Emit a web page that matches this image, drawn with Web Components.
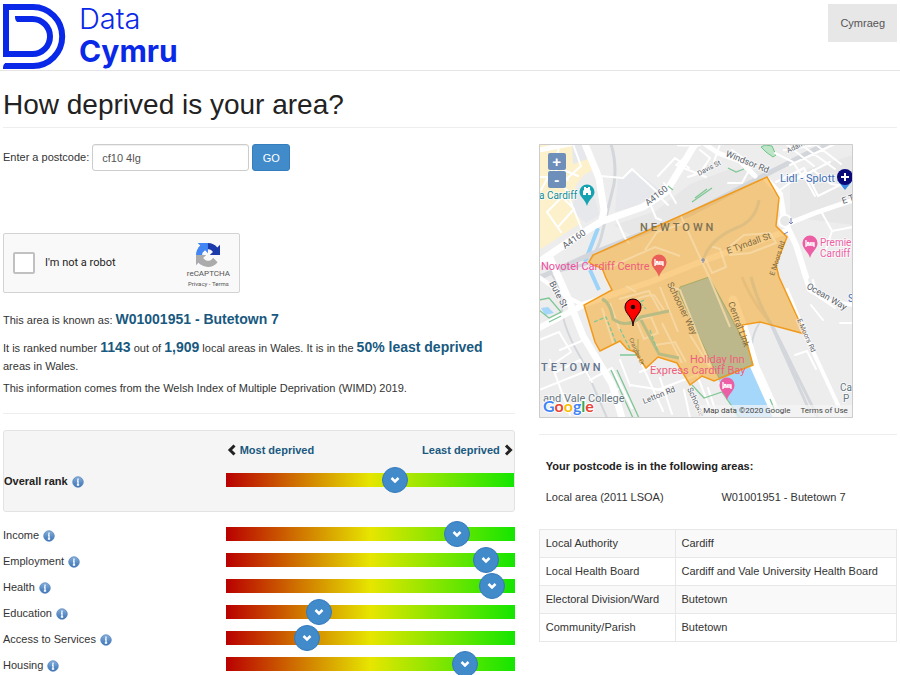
<!DOCTYPE html>
<html lang="en">
<head>
<meta charset="utf-8">
<meta name="viewport" content="width=device-width, initial-scale=1">
<title>How deprived is your area?</title>
<style>
:root{--ink:#333;--accent:#19597f;--brand:#428bca;--rule:#eee;}
body{margin:0;background:#fff;color:var(--ink);font:11px/16px "Liberation Sans",Arial,sans-serif;}
</style>
</head>
<body>
<wimd-page></wimd-page>

<template id="t-page">
<style>
:host{display:block}
main{padding:0 3px}
.cols{display:grid;grid-template-columns:minmax(0,10fr) minmax(0,7fr);gap:24px;align-items:start;padding-top:16px}
h1{margin:0;padding:16px 0 4px;font-size:28px;line-height:36px;font-weight:400;color:#222;border-bottom:1px solid var(--rule)}
hr{border:0;border-top:1px solid var(--rule);margin:16px 0}
robot-check{margin-top:62px}
area-summary{margin-top:18px}
.ranks{margin-top:9px}
</style>
<site-header></site-header>
<main>
  <h1>How deprived is your area?</h1>
  <div class="cols">
    <section>
      <postcode-form></postcode-form>
      <robot-check></robot-check>
      <area-summary></area-summary>
      <hr>
      <rank-well><rank-row value="597" strong>Overall rank</rank-row></rank-well>
      <div class="ranks">
        <rank-row value="829">Income</rank-row>
        <rank-row value="939">Employment</rank-row>
        <rank-row value="962">Health</rank-row>
        <rank-row value="304">Education</rank-row>
        <rank-row value="259">Access to Services</rank-row>
        <rank-row value="860">Housing</rank-row>
      </div>
    </section>
    <section>
      <area-map></area-map>
      <hr>
      <area-tables></area-tables>
    </section>
  </div>
</main>
</template>

<template id="t-header">
<style>
:host{display:block;border-bottom:1px solid #e5e5e5}
header{display:flex;justify-content:space-between;align-items:flex-start;padding:4px 3px 0}
.logo{display:block;color:#0a28e8}
svg{display:block;overflow:visible}
.lang{background:#e7e7e7;color:#555;text-decoration:none;padding:11px 12px;line-height:16px}
</style>
<header>
  <a class="logo" href="#" aria-label="Data Cymru">
    <svg width="180" height="66" viewBox="3 4 180 66">
      <g fill="none" stroke="currentColor" stroke-width="6"><path d="M17 19H32.500A17.500 17.500 0 0 1 32.500 54H6V7H33A29.200 29.500 0 0 1 33 66H5"/></g>
      <path fill="currentColor" d="M15 16h4v6c-3 0-4-2-4-6zM3 69c0-4 1-6 4-6v6z"/>
      <g fill="currentColor" font-family="Inter, sans-serif"><text x="79" y="29" font-size="29" font-weight="300">Data</text><text x="79" y="62" font-size="30" font-weight="700">Cymru</text></g>
    </svg>
  </a>
  <a class="lang" href="#">Cymraeg</a>
</header>
</template>

<template id="t-form">
<style>
:host{display:block}
form{display:flex;align-items:center;gap:3px}
label{padding-bottom:2px}
input{box-sizing:border-box;width:157px;height:27px;border:1px solid #ccc;border-radius:3px;padding:0 9px;font:inherit;color:#555;background:#fff;box-shadow:inset 0 1px 1px #0001}
button{box-sizing:border-box;height:27px;width:38px;padding:0;border:1px solid #357ebd;border-radius:3px;background:var(--brand);color:#fff;font:inherit}
</style>
<form onsubmit="return false"><label for="pc">Enter a postcode:</label><input id="pc" type="text" value="cf10 4lg"><button>GO</button></form>
</template>

<template id="t-robot">
<style>
:host{display:block}
.box{box-sizing:border-box;width:237px;height:60px;display:flex;align-items:center;border:1px solid #d3d3d3;border-radius:2px;background:#f9f9f9;padding:0 9px;color:#222;font-family:Roboto,sans-serif}
label{display:flex;align-items:center;gap:10px;flex:1}
input{appearance:none;margin:0;width:22px;height:22px;box-sizing:border-box;border:2px solid #c1c1c1;border-radius:2px;background:#fff}
.brand{display:flex;flex-direction:column;align-items:center;color:#555;font-size:8px;line-height:10px;padding-top:6px}
.brand svg{display:block;margin-bottom:2px}
small{font-size:6px;line-height:10px}
a{color:inherit;text-decoration:none}
</style>
<div class="box">
  <label><input type="checkbox">I'm not a robot</label>
  <div class="brand">
    <svg width="24" height="24" viewBox="0 0 64 64"><path fill="#1c3aa9" d="M64 32V4.700l-7.200 7.200C51 4.700 42 .1 32 .1 21.600.1 12.400 5 6.500 12.700l11.800 11.900a15.500 15.500 0 0 1 4.700-5.300c2-1.600 5-2.900 9-2.900l1.200.1c5 .4 9.400 3.200 12 7.200L36.800 32z"/><path fill="#4285f4" d="M31.900.1H4.600l7.200 7.200C4.600 13.100 0 22 0 32c0 10.400 5 19.700 12.600 25.500l11.900-11.700a15.500 15.500 0 0 1-5.300-4.700c-1.600-2-2.900-5-2.900-9l.1-1.200c.4-5 3.200-9.400 7.200-12l8.300 8.300z"/><path fill="#ababab" d="M0 32v27.300l7.200-7.200C13 59.300 22 63.900 32 63.900c10.400 0 19.700-5 25.500-12.600L45.700 39.400a15.500 15.500 0 0 1-4.700 5.300c-2 1.600-5 2.900-9 2.900l-1.200-.1c-5-.4-9.400-3.200-12-7.200l8.400-8.300z"/></svg>
    <span>reCAPTCHA</span><small><a href="#">Privacy</a> - <a href="#">Terms</a></small>
  </div>
</div>
</template>

<template id="t-summary">
<style>
:host{display:block;padding-right:24px}
p{margin:0 0 4px;line-height:18px}
p:first-of-type{margin-bottom:10px}
b{font-size:14px;line-height:14px;color:var(--accent)}
</style>
<p>This area is known as: <b>W01001951 - Butetown 7</b></p>
<p>It is ranked number <b>1143</b> out of <b>1,909</b> local areas in Wales. It is in the <b>50% least deprived</b> areas in Wales.</p>
<p>This information comes from the Welsh Index of Multiple Deprivation (WIMD) 2019.</p>
</template>

<template id="t-well">
<style>
:host{display:block;border:1px solid #e3e3e3;border-radius:3px;background:#f5f5f5;padding:11px 0 18px}
.ends{display:grid;grid-template-columns:10fr 13fr;margin-bottom:9px}
.ends div{grid-column:2;display:flex;justify-content:space-between;color:var(--accent);font-weight:700}
span{display:flex;align-items:center;gap:4px}
svg{display:block;fill:none;stroke:#222;stroke-width:3}
</style>
<div class="ends"><div>
  <span><svg width="10" height="12" viewBox="0 0 10 12"><path d="M8.500 1.500 4 6l4.500 4.500"/></svg>Most deprived</span>
  <span>Least deprived<svg width="10" height="12" viewBox="0 0 10 12"><path d="M2 1.500 6.500 6 2 10.500"/></svg></span>
</div></div>
<slot></slot>
</template>

<template id="t-row">
<style>
:host{display:grid;grid-template-columns:10fr 13fr;align-items:center;height:26px}
:host([strong]){font-weight:700;color:#222}
.name{display:flex;align-items:center;gap:4px;padding-top:2px}
button{border:0;padding:0;background:none;display:block;width:12px;height:12px;margin-top:1px}
svg{display:block}
input{appearance:none;box-sizing:border-box;display:block;width:100%;margin:0;height:14px;background:linear-gradient(90deg,#b90000,#e6e600 50%,#14e600)}
input::-webkit-slider-runnable-track{height:14px}
input::-webkit-slider-thumb{appearance:none;width:26px;height:26px;margin-top:-6px;border:1px solid #3379bd;border-radius:50%;background:#428bca url("data:image/svg+xml,%3Csvg xmlns='http://www.w3.org/2000/svg' viewBox='0 0 24 24'%3E%3Cpath d='M8.500 10l3.500 3.500L15.500 10' fill='none' stroke='white' stroke-width='2.500'/%3E%3C/svg%3E") center/24px no-repeat;box-sizing:border-box}
</style>
<div class="name"><label for="r"><slot></slot></label><button type="button" aria-label="More information"><svg width="12" height="12" viewBox="0 0 12 12"><defs><linearGradient id="g" x2="0" y2="1"><stop stop-color="#86afdc"/><stop offset="1" stop-color="#3a73b5"/></linearGradient></defs><circle cx="6" cy="6" r="5.300" fill="url(#g)" stroke="#5482b8" stroke-width=".7"/><path d="M6 2.500v1.500M5 5h1v4M4.800 9h2.400" stroke="#fff" stroke-width="1.300" fill="none"/></svg></button></div>
<input id="r" type="range" min="0" max="1000">
</template>

<template id="t-tables">
<style>
:host{display:block}
table{border-collapse:collapse;table-layout:fixed;width:100%}
td,th{box-sizing:border-box;padding:0;text-align:left;font-weight:400;line-height:15px}
.one{margin-bottom:16px}
.one caption{text-align:left;font-weight:700;color:#222;padding:7px 7px 8px;line-height:16px}
.one th{padding:8px 7px;width:51%}
.two td,.two th{border:1px solid #e7e7e7;padding:6px}
.two th{width:38%;white-space:nowrap}
.two tr:nth-child(odd){background:#f9f9f9}
</style>
<table class="one"><caption>Your postcode is in the following areas:</caption><tbody><tr><th scope="row">Local area (2011 LSOA)</th><td>W01001951 - Butetown 7</td></tr></tbody></table>
<table class="two"><tbody>
<tr><th scope="row">Local Authority</th><td>Cardiff</td></tr>
<tr><th scope="row">Local Health Board</th><td>Cardiff and Vale University Health Board</td></tr>
<tr><th scope="row">Electoral Division/Ward</th><td>Butetown</td></tr>
<tr><th scope="row">Community/Parish</th><td>Butetown</td></tr>
</tbody></table>
</template>

<template id="t-map">
<style>
:host{display:block;position:relative;max-width:314px;font-family:Roboto,sans-serif;overflow:hidden}
svg{display:block;width:100%;height:auto}
.zoom{position:absolute;left:9px;top:9px;display:grid;gap:1px}
.zoom button{width:18px;height:17px;padding:0;border:0;border-radius:2px;background:#6f8fbb;color:#fff;font:700 15px/16px "Liberation Sans",Arial,sans-serif}
.credit{position:absolute;right:1px;bottom:1px;background:#f5f5f5b3;color:#444;font-size:8px;line-height:12px;padding:0 4px;display:flex;gap:10px}
.credit a{color:inherit;text-decoration:none}
.road{fill:none;stroke:#fff;stroke-linejoin:round;stroke-linecap:round}
.rail{fill:none;stroke:#d3d6db;stroke-linejoin:round}
.green{fill:none;stroke:#7fc796;stroke-width:1.300}
.halo{stroke:#fff;stroke-width:2;paint-order:stroke;stroke-opacity:.6}
</style>
<svg viewBox="539 144 314 274" role="img" aria-label="Map of Butetown 7">
<defs>
<clipPath id="zone"><path d="M589 262 593 255 767 177 779 198 776 226 787 237 776 265 779 277 805 334 760 322 742 325 753 365 714 381 702 376 690 385 677 363 658 357 646 368 635 352 627 349 620 341 600 351 595 342 584 305 612 290 606 278 602 268 593 265Z"/></clipPath>
<g id="bed"><path d="M0 12C-2 5-7.500 3-7.500-3a7.500 7.500 0 0 1 15 0C7.500 3 2 5 0 12z"/><path d="M-4-6v7M-4-1H4v2M4-1v-2H0v2" fill="none" stroke="#fff" stroke-width="1.300"/><circle cx="-2" cy="-3" r="1.200" fill="#fff"/></g>
</defs>
<path fill="#ededed" d="M539 144h314v274H539z"/>
<path fill="#fdf1cb" d="M539 144h45l12 24-12 7-8 10-4 18 9 20-42 27z"/>
<path fill="#e6e8ec" d="M572 144h13l6 14-18 6zM590 185l10 30-14 8-14-12 4-22zM618 178l18-7 27 21-30 15-18 5z"/>
<path fill="#e7e7e7" d="M690 184l40-15 38 2-78 40-60 24-16-10 42-14zM790 175l63-20v70l-63-8z"/>
<path fill="#bfe5c8" stroke="#6fc488" d="M761 147l4-2 7 1 4 9-3 2-7-5z"/>
<path fill="#a5d7fa" d="M718 379 753 366 773 418H737zM541 308l7-1 6 6-9 2z"/>
<path d="M598 228 585 262M590 270l9 20" stroke="#9cd3f8" stroke-width="4" fill="none"/>
<g class="rail"><path stroke-width="3" d="M611 144q6 20 3 40l-12 50q-4 18-16 30l-47 12"/><path stroke-width="5" d="M539 278 591 254 690 214 767 174 853 130"/><path stroke-width="3" d="M751 277q8 30 22 50l45 91M742 277q10 25 28 45l40 90"/><path stroke-width="2" d="M760 322q-13 20-5 38l25 58M552 275q8 10 10 35 2 20 20 50l25 58"/></g>
<g class="road">
<g stroke-width="2"><path d="M541 190l12-22 15 12M560 144l-6 22 24 10M573 144l8 22-20 18M547 212l15-15 12 12-16 18M566 190l16 40M547 212l14 20M539 177h10l18 13M600 176l23 2 9-9 24 22M651 206l5 12 5 2M616 218l9 20 4 5M660 197l8 8"/><path d="M700 150l10 8-10 15-12 4M720 144l-6 18M732 150l20 15-10 18h-14M775 153l18 9 9 14M786 144l28 22M800 144l35 25M815 144l26 20M790 165l45-21M795 180l35-18M776 182l28-14 14 28 28-14M780 190l25-18M815 196l-10-18 8-8 18 14 14 2M822 213l10 18-6 18M832 231l21-4M784 150l38-6M706 177l-30-12 18-15M658 176l17-18 14 10M676 203l-12-20"/><path d="M813 280l4 16 18 12M795 355l12-4 9 18M840 323h13M811 305l12 15M590 380l22-12 20 40M560 350l24-10M550 360l20 55M539 390l50-20M600 400l20-12M633 345l30 66M640 372l14-6M657 390l40-15 14 36M539 340l20-8 12 20-22 15M556 372l24-12 12 22M620 360l10 26M630 385l32 5M660 378l12 36M684 390l6 28M708 388l10 30"/></g>
<g stroke-width="7"><path d="M585 144l14 34 5 32-2 11-29 18-40 27M603 221l40-14 23-15 14-23 15-25"/><path d="M539 328 585 304 650 282 700 262 787 231" stroke-width="6"/><path d="M550 258l18 40 15 38 29 48 10 34"/><path d="M767 180l13 14 4 26 12 25 10 32" stroke-width="6"/></g>
<path stroke-width="5" d="M785 225l30-12 38-13M539 150 570 144M705 144l13 9 22 8 15 15M679 144h20"/><path stroke-width="4" d="M787 290l18 44 33 71 5 13M803 270l6 20 20 11 24 4M539 277l28 20 16 8"/><path stroke-width="9" d="M733 300l10 27 12 40 23 51"/>
<circle cx="785" cy="221" r="6" fill="#e8e8e8" stroke-width="2"/></g>
<g class="green"><path d="M611 370l22 48M617 370l22 48M620 355h18v-16M692 385l12 13 18-6 18 26M539 300l10-2 12 14-12 6-10-8M549 322l12-6M692 202l20-14M668 186l5 4M728 168l8 4 8-3M695 198l12-9M770 399l5 12"/></g>
<g clip-path="url(#zone)">
<path fill="#f5ad35" fill-opacity=".58" d="M539 144h314v274H539z"/>
<path fill="#bdb88b" d="M680 287 709 277 752 356 752 365 719 378 713 366 679 293z" stroke="#a7ab68" stroke-width="1"/>
<g fill="none" stroke="#f7dba9" stroke-opacity=".8" stroke-width="2"><path d="M610 267l45-20 25 9M645 250l12-18 25-8M680 214l30 65 20 48M729 247l15-12 26-2 6 10-26 10-20 2zM704 256l7-10 9 3 6 18-14 6zM668 286l12 4 30 76M660 287l18 45M602 308l12 38M610 303l10 28M619 299l30-8 12 22-22 6M636 320l15-3 7 16-14 6zM655 345l20-3 11 20M662 323l20 40M629 308q5-12 25-13l10 15M626 286l10 6M690 335l20 32"/></g>
<path d="M602 299q8 3 11 20 14 10 28-2l28-6M641 320l18 34 20 4" fill="none" stroke="#b8bb83" stroke-width="3"/>
<g class="green" stroke-dasharray="4 2"><path d="M594 322l12-5 14 36M620 329l10 20M630 308l14-8M640 303l6 6M650 330l7 20"/></g>
<path d="M759 200q-3 18-18 26-32 12-38 35M751 277q8 30 22 50" fill="none" stroke="#dfbe82" stroke-width="3"/>
</g>
<path fill="none" stroke="#f19a1b" stroke-width="1.500" d="M589 262 593 255 767 177 779 198 776 226 787 237 776 265 779 277 805 334 760 322 742 325 753 365 714 381 702 376 690 385 677 363 658 357 646 368 635 352 627 349 620 341 600 351 595 342 584 305 612 290 606 278 602 268 593 265Z"/>
<g font-size="9" fill="#5c636b" class="halo">
<text transform="translate(565 249) rotate(-35)">A4160</text><text transform="translate(648 206) rotate(-38)">A4160</text>
<text transform="translate(725 156) rotate(22)">Windsor Rd</text>
<text transform="translate(699 176) rotate(-28)" font-size="7">Davis St</text>
<text transform="translate(788 153) rotate(-25)" font-size="7">Adam</text>
<text transform="translate(843 204) rotate(-18)">E T</text>
<text transform="translate(549 283) rotate(62)">Bute St</text>
<text transform="translate(806 288) rotate(30)">Ocean Way</text>
<text transform="translate(797 320) rotate(66)" font-size="7">E Moors Rd</text>
<text transform="translate(644 404) rotate(-22)" font-size="8">Letton Rd</text>
<text transform="translate(687 389) rotate(65)" font-size="8">Schoone</text>
</g>
<g font-size="9" fill="#7d6a42">
<text transform="translate(728 254) rotate(-20)">E Tyndall St</text>
<text transform="translate(667 284) rotate(64)">Schooner Way</text>
<text transform="translate(728 303) rotate(70)">Central Link</text>
<text transform="translate(629 339) rotate(66)" font-size="6">Craiglee Dr</text>
<text transform="translate(774 276) rotate(-72)" font-size="7">E Moors Rd</text>
</g>
<g font-size="11" font-weight="500" letter-spacing="3"><text x="640" y="231" fill="#7d7054">NEWTOWN</text><text x="541" y="371" fill="#64748c">TETOWN</text></g>
<g font-size="10" class="halo"><text x="539" y="199" fill="#138d9b">a Cardiff</text><text x="780" y="182" fill="#3f6fb5" font-size="11">Lidl - Splott</text><text x="820" y="246" fill="#ec5fa5">Premie</text><text x="820" y="257" fill="#ec5fa5">Cardiff</text><text x="543" y="402" fill="#687883" font-size="11">and Vale College</text><text x="840" y="391" fill="#687883">Ca</text><text x="843" y="402" fill="#687883">P</text><text x="848" y="302" fill="#3f6fb5">S</text></g>
<g font-size="11" fill="#ee5f7c"><text x="541" y="270"><tspan fill="#ee4fa0">Novotel Ca</tspan>rdiff Centre</text><text x="690" y="363">Holiday Inn</text><text x="650" y="374">Express Cardiff Bay</text></g>
<use href="#bed" x="659" y="265" fill="#ea6058"/><use href="#bed" x="810" y="246" fill="#ec5fa5"/><use href="#bed" x="727" y="388" fill="#ec5fa5"/>
<g transform="translate(587 195)"><path fill="#15a3b2" d="M0 11C-2 4-7.500 2-7.500-3a7.500 7.500 0 0 1 15 0C7.500 2 2 4 0 11z"/><path fill="#fff" d="M-3-8h2v1h2v-1h2v3l1 1v4h-3v-2h-2v2h-3v-4l1-1z"/></g>
<path fill="#3b8be0" d="M837 180h16l-8 10z"/><circle cx="845" cy="177" r="8" fill="#0a0a78"/><path d="M845 173v8M841 177h8" stroke="#fff" stroke-width="2"/>
<path d="M633 326c0-9-8-12-8-19a8 8 0 0 1 16 0c0 7-8 10-8 19z" fill="#f00" stroke="#200" stroke-width="1"/><circle cx="633" cy="307" r="2.300" fill="#200"/>
<path d="M791 218v6m-2-2 2 2 2-2M784 234l4-2M703 258v5m-2-3h4" stroke="#7884b8" fill="none"/>
<text x="543" y="412" font-family="Lato, sans-serif" font-size="16" font-weight="700" stroke="#fff" stroke-width="2" paint-order="stroke"><tspan fill="#4285f4">G</tspan><tspan fill="#ea4335">o</tspan><tspan fill="#fbbc05">o</tspan><tspan fill="#4285f4">g</tspan><tspan fill="#34a853">l</tspan><tspan fill="#ea4335">e</tspan></text>
<path fill="none" stroke="#ccc" d="M539.500 144.500h313v273h-313z"/>
</svg>
<div class="zoom"><button type="button" aria-label="Zoom in">+</button><button type="button" aria-label="Zoom out">-</button></div>
<div class="credit"><span>Map data ©2020 Google</span><a href="#">Terms of Use</a></div>
</template>

<script>
const element = (name, id, setup) => customElements.define(name, class extends HTMLElement {
  constructor() {
    super();
    this.attachShadow({ mode: "open" }).append(document.getElementById(id).content.cloneNode(true));
  }
  connectedCallback() { if (setup) setup(this); }
});
element("site-header", "t-header");
element("postcode-form", "t-form");
element("robot-check", "t-robot");
element("area-summary", "t-summary");
element("rank-well", "t-well");
element("rank-row", "t-row", el => { el.shadowRoot.querySelector("input").value = el.getAttribute("value"); });
element("area-map", "t-map");
element("area-tables", "t-tables");
element("wimd-page", "t-page");
</script>
</body>
</html>
